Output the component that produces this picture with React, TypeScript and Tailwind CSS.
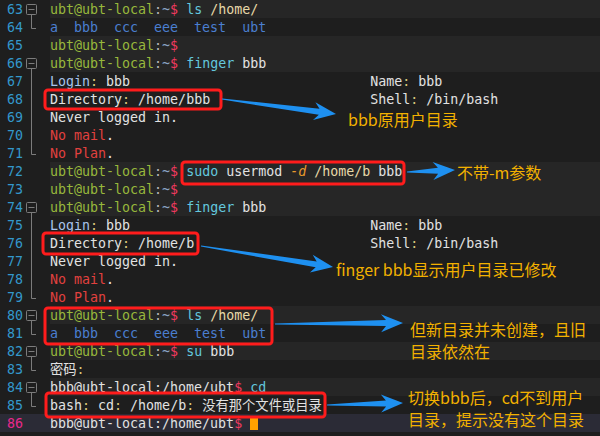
import type { ReactNode } from 'react';

type Fold = 'start' | 'mid' | 'end' | null;
type Row = { n: number; bg: 'cmd' | 'out' | 'cur'; fold: Fold; content: ReactNode };

const c = {
  green: 'text-[#98b83c]',
  colon: 'text-[#b5b5b5]',
  tilde: 'text-[#8aa4c4]',
  dollar: 'text-[#f03a5f]',
  cmd: 'text-[#63c8de]',
  path: 'text-[#e6d9a8]',
  white: 'text-[#e2e2e2]',
  punct: 'text-[#d9c77a]',
  ls: 'text-[#4b7fd0]',
  red: 'text-[#e2413f]',
  opt: 'text-[#e89a2c] italic',
  login: 'text-[#a9c4ec]',
};

function Prompt() {
  return (
    <>
      <span className={c.green}>ubt@ubt-local</span>
      <span className={c.colon}>:</span>
      <span className={c.tilde}>~</span>
      <span className={c.dollar}>$</span>
    </>
  );
}

function BbbPrompt() {
  return (
    <>
      <span className={c.white}>bbb@ubt-local:/home/ubt</span>
      <span className={c.dollar}>$</span>
    </>
  );
}

function KV({ k, v, kc = c.white }: { k: string; v: string; kc?: string }) {
  return (
    <>
      <span className={kc}>{k}</span>
      <span className={c.punct}>:</span>
      <span className={c.white}> {v}</span>
    </>
  );
}

function FingerOut({ dir }: { dir: string }) {
  return [
    <>
      <KV k="Login" v="bbb" kc={c.login} />
      {' '.repeat(30)}
      <KV k="Name" v="bbb" />
    </>,
    <>
      <KV k="Directory" v={dir} />
      {' '.repeat(40 - 11 - dir.length)}
      <KV k="Shell" v="/bin/bash" />
    </>,
    <span className={c.white}>Never logged in.</span>,
    <>
      <span className={c.red}>No mail</span>
      <span className={c.white}>.</span>
    </>,
    <>
      <span className={c.red}>No Plan</span>
      <span className={c.white}>.</span>
    </>,
  ];
}

const lsOut = <span className={c.ls}>a  bbb  ccc  eee  test  ubt</span>;
const lsCmd = (
  <>
    <Prompt /> <span className={c.cmd}>ls</span> <span className={c.path}>/home/</span>
  </>
);
const fingerCmd = (
  <>
    <Prompt /> <span className={c.cmd}>finger</span> <span className={c.white}>bbb</span>
  </>
);

const f1 = FingerOut({ dir: '/home/bbb' });
const f2 = FingerOut({ dir: '/home/b' });

const rows: Row[] = [
  { n: 63, bg: 'cmd', fold: 'start', content: lsCmd },
  { n: 64, bg: 'out', fold: 'end', content: lsOut },
  { n: 65, bg: 'cmd', fold: null, content: <Prompt /> },
  { n: 66, bg: 'cmd', fold: 'start', content: fingerCmd },
  { n: 67, bg: 'out', fold: 'mid', content: f1[0] },
  { n: 68, bg: 'out', fold: 'mid', content: f1[1] },
  { n: 69, bg: 'out', fold: 'mid', content: f1[2] },
  { n: 70, bg: 'out', fold: 'mid', content: f1[3] },
  { n: 71, bg: 'out', fold: 'end', content: f1[4] },
  {
    n: 72,
    bg: 'cmd',
    fold: null,
    content: (
      <>
        <Prompt /> <span className={c.cmd}>sudo</span> <span className={c.white}>usermod</span>{' '}
        <span className={c.opt}>-d</span> <span className={c.path}>/home/b</span>{' '}
        <span className={c.white}>bbb</span>
      </>
    ),
  },
  { n: 73, bg: 'cmd', fold: null, content: <Prompt /> },
  { n: 74, bg: 'cmd', fold: 'start', content: fingerCmd },
  { n: 75, bg: 'out', fold: 'mid', content: f2[0] },
  { n: 76, bg: 'out', fold: 'mid', content: f2[1] },
  { n: 77, bg: 'out', fold: 'mid', content: f2[2] },
  { n: 78, bg: 'out', fold: 'mid', content: f2[3] },
  { n: 79, bg: 'out', fold: 'end', content: f2[4] },
  { n: 80, bg: 'cmd', fold: 'start', content: lsCmd },
  { n: 81, bg: 'out', fold: 'end', content: lsOut },
  {
    n: 82,
    bg: 'cmd',
    fold: 'start',
    content: (
      <>
        <Prompt /> <span className={c.cmd}>su</span> <span className={c.white}>bbb</span>
      </>
    ),
  },
  {
    n: 83,
    bg: 'out',
    fold: 'end',
    content: (
      <>
        <span className={c.white}>密码</span>
        <span className={c.punct}>:</span>
      </>
    ),
  },
  {
    n: 84,
    bg: 'cmd',
    fold: 'start',
    content: (
      <>
        <BbbPrompt /> <span className={c.cmd}>cd</span>
      </>
    ),
  },
  {
    n: 85,
    bg: 'out',
    fold: 'end',
    content: (
      <>
        <span className={c.white}>bash</span>
        <span className={c.punct}>:</span>
        <span className={c.white}> cd</span>
        <span className={c.punct}>:</span>
        <span className={c.white}> /home/b</span>
        <span className={c.punct}>:</span>
        <span className={c.white}> 没有那个文件或目录</span>
      </>
    ),
  },
  {
    n: 86,
    bg: 'cur',
    fold: null,
    content: (
      <>
        <BbbPrompt />{' '}
        <span className="inline-block w-[8px] h-[14px] bg-[#ffa200] align-[-2px]" />
      </>
    ),
  },
];

function FoldMark({ fold }: { fold: Fold }) {
  return (
    <svg width="27" height="18" viewBox="0 0 27 18" className="shrink-0" fill="none" stroke="#7c7c7c">
      {fold === 'start' && (
        <>
          <rect x="3.5" y="4.5" width="10" height="10" rx="1" />
          <line x1="5.5" y1="9.5" x2="11.5" y2="9.5" />
          <line x1="8.5" y1="14.5" x2="8.5" y2="18" />
        </>
      )}
      {fold === 'mid' && <line x1="8.5" y1="0" x2="8.5" y2="18" />}
      {fold === 'end' && <path d="M8.5 0 V10.5 H13" />}
    </svg>
  );
}

// tapered arrow polygon: thin tail, widening shaft, swept-back head
function arrowPoints(x1: number, y1: number, x2: number, y2: number, L = 17, H = 9, W = 3) {
  const dx = x2 - x1;
  const dy = y2 - y1;
  const len = Math.hypot(dx, dy);
  const ux = dx / len;
  const uy = dy / len;
  const nx = -uy;
  const ny = ux;
  const px = x2 - ux * L;
  const py = y2 - uy * L;
  const pts = [
    [x1 + nx * 0.6, y1 + ny * 0.6],
    [px + nx * W, py + ny * W],
    [px - ux * 5 + nx * H, py - uy * 5 + ny * H],
    [x2, y2],
    [px - ux * 5 - nx * H, py - uy * 5 - ny * H],
    [px - nx * W, py - ny * W],
    [x1 - nx * 0.6, y1 - ny * 0.6],
  ];
  return pts.map((p) => `${p[0].toFixed(1)},${p[1].toFixed(1)}`).join(' ');
}

const boxes = [
  [45, 90, 176, 19],
  [182, 162, 222, 22],
  [43, 233, 155, 21],
  [45, 308, 227, 36],
  [46, 393, 279, 24],
];

const arrows: [number, number, number, number][] = [
  [222, 99, 336, 114],
  [407, 172, 455, 170],
  [201, 246, 333, 267],
  [275, 324, 403, 323],
  [327, 405, 403, 403],
];

export default function App() {
  return (
    <div className="relative w-[600px] h-[436px] overflow-hidden bg-[#1e1e1e] font-['DejaVu_Sans_Mono','Noto_Sans_CJK_SC',monospace] text-[13.3px] leading-[19px]">
      <div className="flex flex-col">
        {rows.map((r) => (
          <div
            key={r.n}
            className={`flex h-[18px] ${r.bg === 'cur' ? 'bg-[#2b2b36]' : ''}`}
          >
            <div className="flex w-[50px] shrink-0">
              <span
                className={`w-[23px] text-right ${r.bg === 'cur' ? 'text-[#e8288c]' : 'text-[#3398cc]'}`}
              >
                {r.n}
              </span>
              <FoldMark fold={r.fold} />
            </div>
            <div
              className={`flex-1 whitespace-pre ${
                r.bg === 'cmd' ? 'bg-[#262626]' : r.bg === 'out' ? 'bg-[#1e1e1e]' : ''
              }`}
            >
              {r.content}
            </div>
          </div>
        ))}
      </div>

      {/* annotation layer */}
      <svg className="absolute inset-0" width="600" height="436" viewBox="0 0 600 436">
        {boxes.map(([x, y, w, h], i) => (
          <rect key={i} x={x} y={y} width={w} height={h} rx="3" fill="none" stroke="#ff1c1c" strokeWidth="3" />
        ))}
        {arrows.map(([a, b, d, e], i) => (
          <polygon key={i} points={arrowPoints(a, b, d, e)} fill="#1e90f0" />
        ))}
      </svg>

      <div className="absolute inset-0 font-['Noto_Sans_CJK_SC','Noto_Sans',sans-serif] text-[16px] leading-[22px] text-[#f2b100]">
        <div className="absolute left-[348px] top-[108px]">bbb原用户目录</div>
        <div className="absolute left-[457px] top-[161px]">不带-m参数</div>
        <div className="absolute left-[336px] top-[258px]">finger bbb显示用户目录已修改</div>
        <div className="absolute left-[410px] top-[318px]">
          但新目录并未创建，且旧
          <br />
          目录依然在
        </div>
        <div className="absolute left-[408px] top-[386px]">
          切换bbb后，cd不到用户
          <br />
          目录，提示没有这个目录
        </div>
      </div>
    </div>
  );
}
